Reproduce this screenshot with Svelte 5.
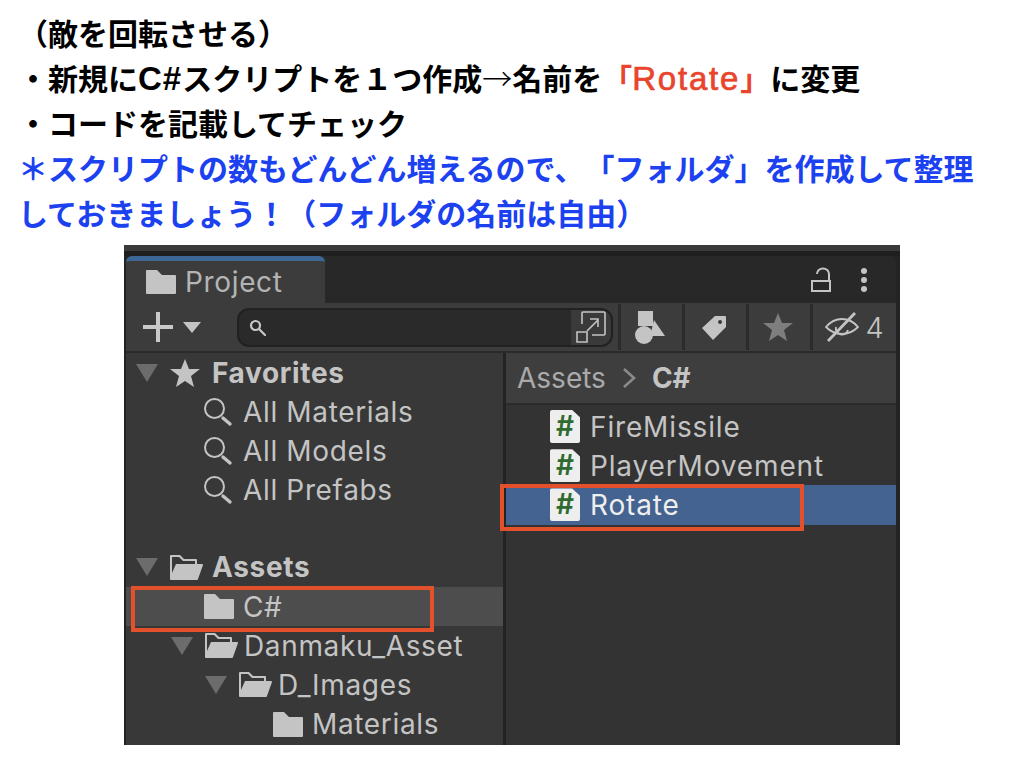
<script>
	const favorites = ['All Materials', 'All Models', 'All Prefabs'];
	const tree = [
		{ name: 'C#', indent: 78, open: false, selected: true },
		{ name: 'Danmaku_Asset', indent: 45, open: true },
		{ name: 'D_Images', indent: 79, open: true },
		{ name: 'Materials', indent: 147, open: false, noArrow: true }
	];
	const scripts = ['FireMissile', 'PlayerMovement', 'Rotate'];
</script>

<main class="page">
	<section class="notes">
		<p class="first">（敵を回転させる）</p>
		<p>・新規に<span class="latin">C#</span>スクリプトを１つ作成<span class="thin">→</span>名前を<span class="red">「<span class="latin">Rotate</span>」</span>に変更</p>
		<p>・コードを記載してチェック</p>
		<p class="blue">＊スクリプトの数もどんどん増えるので、「フォルダ」を作成して整理</p>
		<p class="blue">しておきましょう！（フォルダの名前は自由）</p>
	</section>

	<section class="panel">
		<div class="strip"></div>
		<header class="tabbar">
			<div class="tab">
				<svg class="tab-folder" viewBox="0 0 30 24"><path d="M1 0h10l5 5h13a1 1 0 0 1 1 1v17a1 1 0 0 1-1 1H1a1 1 0 0 1-1-1V1a1 1 0 0 1 1-1z" /></svg>
				<span>Project</span>
			</div>
			<div class="tab-actions">
				<svg width="20" height="26" viewBox="0 0 20 26" fill="none" stroke="#c4c4c4" stroke-width="2">
					<path d="M1 14h18v10H1z" /><path d="M6 7a6 5.5 0 0 1 12 0v7" />
				</svg>
				<svg width="10" height="26" viewBox="0 0 10 26" fill="#c4c4c4">
					<circle cx="5" cy="4" r="3" /><circle cx="5" cy="13" r="3" /><circle cx="5" cy="22" r="3" />
				</svg>
			</div>
		</header>

		<div class="toolbar">
			<div class="create">
				<svg width="30" height="30" viewBox="0 0 30 30" fill="#c9c9c9"><path d="M13 0h4v13h13v4H17v13h-4V17H0v-4h13z" /></svg>
				<svg width="18" height="11" viewBox="0 0 18 11" fill="#c4c4c4"><path d="M0 0h18L9 11z" /></svg>
			</div>
			<div class="search">
				<svg class="lens" width="17" height="17" viewBox="0 0 17 17" fill="none" stroke="#c8c8c8" stroke-width="2.2">
					<circle cx="6.5" cy="6.5" r="4.5" /><path d="M10 10l6 6" stroke-linecap="round" />
				</svg>
				<div class="search-end">
					<svg width="30" height="32" viewBox="0 0 30 32" fill="none" stroke="#c4c4c4" stroke-width="1.6">
						<path d="M6 13V2a1 1 0 0 1 1-1h21a1 1 0 0 1 1 1v21a1 1 0 0 1-1 1H16" />
						<path d="M1 21h10v10H1z" /><path d="M11 20l11-11M14 8h8v8" />
					</svg>
				</div>
			</div>
			<div class="tool">
				<svg width="30" height="33" viewBox="0 0 30 33" fill="#c4c4c4">
					<path d="M3 0h15v15H3z" /><path d="M19 9l11 16H15z" /><circle cx="9" cy="24" r="9" />
				</svg>
			</div>
			<div class="tool">
				<svg width="26" height="26" viewBox="0 0 26 26" fill="#c4c4c4" fill-rule="evenodd">
					<path d="M14 2h10a1 1 0 0 1 1 1v10L12 26 1 14zM19 6a2 2 0 1 0 .1 0z" />
				</svg>
			</div>
			<div class="tool">
				<svg width="30" height="28" viewBox="0 0 30 28" fill="#7e7e7e"><path d="M15 0l4 10h11l-9 7 3 11-9-6-9 6 3-11-9-7h11z" /></svg>
			</div>
			<div class="tool eye">
				<svg width="35" height="30" viewBox="0 0 35 30" fill="none" stroke="#c4c4c4" stroke-width="1.8">
					<path d="M1 15c5-6 10-8 16-8s11 2 16 8c-5 5-10 7-16 7S6 20 1 15z" />
					<path d="M11 15a6 6 0 0 0 12 3" /><path d="M3 29L30 1" stroke-width="2.8" />
				</svg>
				<span>4</span>
			</div>
		</div>

		<div class="body">
			<aside class="left">
				<div class="row head">
					<svg class="arrow" viewBox="0 0 22 18"><path d="M0 0h22L11 18z" /></svg>
					<svg class="head-icon star" width="30" height="28" viewBox="0 0 30 28" fill="#c4c4c4"><path d="M15 0l4 10h11l-9 7 3 11-9-6-9 6 3-11-9-7h11z" /></svg>
					<span>Favorites</span>
				</div>
				{#each favorites as item}
					<div class="row fav">
						<svg width="30" height="30" viewBox="0 0 30 30" fill="none" stroke="#c4c4c4">
							<circle cx="11.5" cy="11.5" r="9.5" stroke-width="2" /><path d="M20 21l7 6" stroke-width="3.4" stroke-linecap="round" />
						</svg>
						<span>{item}</span>
					</div>
				{/each}

				<div class="spacer"></div>

				<div class="row head">
					<svg class="arrow" viewBox="0 0 22 18"><path d="M0 0h22L11 18z" /></svg>
					<svg class="head-icon" width="33" height="25" viewBox="0 0 33 25" fill="#c4c4c4" fill-rule="evenodd"><path d="M1 0h9l4 4h12a1 1 0 0 1 1 1v4h5a1 1 0 0 1 1 1l-5 14a1 1 0 0 1-1 1H1a1 1 0 0 1-1-1V1a1 1 0 0 1 1-1zM2 2v16L6 9h19V6H13L9 2z" /></svg>
					<span>Assets</span>
				</div>
				{#each tree as item}
					<div class="row node" class:selected={item.selected} style="padding-left: {item.indent}px">
						{#if item.open}
							<svg class="arrow" viewBox="0 0 22 18"><path d="M0 0h22L11 18z" /></svg>
							<svg class="node-icon" width="33" height="25" viewBox="0 0 33 25" fill="#c4c4c4" fill-rule="evenodd"><path d="M1 0h9l4 4h12a1 1 0 0 1 1 1v4h5a1 1 0 0 1 1 1l-5 14a1 1 0 0 1-1 1H1a1 1 0 0 1-1-1V1a1 1 0 0 1 1-1zM2 2v16L6 9h19V6H13L9 2z" /></svg>
						{:else}
							<svg class="node-icon closed" width="30" height="25" viewBox="0 0 30 25" fill="#c4c4c4"><path d="M1 0h10l5 5h13a1 1 0 0 1 1 1v18a1 1 0 0 1-1 1H1a1 1 0 0 1-1-1V1a1 1 0 0 1 1-1z" /></svg>
						{/if}
						<span>{item.name}</span>
					</div>
				{/each}
				<div class="outline tree-mark"></div>
			</aside>

			<div class="right">
				<div class="crumbs">
					<span>Assets</span>
					<svg width="14" height="20" viewBox="0 0 14 20" fill="none" stroke="#8a8a8a" stroke-width="2.6"><path d="M2 1l10 9-10 9" /></svg>
					<b>C#</b>
				</div>
				<div class="files">
					{#each scripts as file}
						<div class="file" class:active={file === 'Rotate'}>
							<div class="doc"><span>#</span></div>
							<span>{file}</span>
						</div>
					{/each}
					<div class="outline file-mark"></div>
				</div>
			</div>
		</div>
	</section>
</main>

<style>
	:global(body) {
		background: #fff;
	}

	.page {
		width: 1024px;
		height: 768px;
		overflow: hidden;
		font-family: 'Noto Sans CJK JP', sans-serif;
	}

	.notes {
		padding: 10px 0 0 18px;
		height: 234px;
		box-sizing: border-box;
		font-size: 30px;
		font-weight: 700;
		color: #000;
		text-spacing-trim: space-all;
	}

	.notes p {
		margin: 0;
		height: 45px;
		line-height: 45px;
		white-space: nowrap;
	}

	.notes .blue {
		color: #1b41f0;
	}

	.latin {
		font-family: 'Liberation Sans', sans-serif;
		font-size: 33px;
		letter-spacing: 1px;
		line-height: 1;
	}

	.thin {
		font-weight: 300;
	}

	.red {
		color: #e8452c;
	}

	.red .latin {
		font-weight: 400;
		letter-spacing: 1.8px;
		-webkit-text-stroke: 0.7px #e8452c;
	}

	.panel {
		margin: 11px 0 0 124px;
		width: 776px;
		height: 500px;
		background: #232323;
		display: flex;
		flex-direction: column;
		font-family: Inter, sans-serif;
		color: #c4c4c4;
		overflow: hidden;
	}

	.strip {
		height: 6px;
		background: #3a3a3a;
		border-bottom: 5px solid #1f1f1f;
		flex: none;
	}

	.tabbar {
		height: 47px;
		flex: none;
		margin-left: 2px;
		margin-right: 4px;
		background: #282828;
		border-radius: 6px 6px 0 0;
		display: flex;
		justify-content: space-between;
		align-items: center;
	}

	.tab {
		width: 199px;
		height: 47px;
		box-sizing: border-box;
		background: #3c3c3c;
		border-top: 5px solid #3d6797;
		border-radius: 6px 6px 0 0;
		display: flex;
		align-items: center;
		gap: 9px;
		padding: 0 0 0 20px;
		font-size: 28px;
		letter-spacing: 0.65px;
		color: #b4b4b4;
	}

	.tab-folder {
		width: 30px;
		height: 24px;
		fill: #c4c4c4;
	}

	.tab-actions {
		display: flex;
		align-items: center;
		gap: 28px;
		padding-right: 27px;
	}

	.toolbar {
		height: 50px;
		flex: none;
		margin-left: 2px;
		margin-right: 4px;
		background: #3c3c3c;
		display: flex;
		align-items: center;
		border-bottom: 2px solid #2a2a2a;
		box-sizing: border-box;
	}

	.create {
		width: 111px;
		flex: none;
		padding-left: 17px;
		box-sizing: border-box;
		display: flex;
		align-items: center;
		gap: 10px;
	}

	.search {
		width: 376px;
		height: 39px;
		flex: none;
		box-sizing: border-box;
		margin-right: 5px;
		background: #2a2a2a;
		border: 2px solid #212121;
		border-radius: 12px;
		display: flex;
		align-items: center;
		justify-content: space-between;
		overflow: hidden;
	}

	.lens {
		margin-left: 10px;
	}

	.search-end {
		width: 40px;
		height: 100%;
		background: #3a3a3a;
		display: flex;
		align-items: center;
		justify-content: center;
	}

	.tool {
		width: 64px;
		height: 46px;
		flex: none;
		background: #3c3c3c;
		border-left: 3px solid #2b2b2b;
		box-sizing: border-box;
		display: flex;
		align-items: center;
		justify-content: center;
	}

	.tool svg {
		margin-right: 3px;
	}

	.tool.eye {
		width: 86px;
		gap: 2px;
		font-size: 29px;
		font-weight: 300;
	}

	.body {
		flex: 1;
		min-height: 0;
		margin-left: 2px;
		margin-right: 4px;
		display: flex;
		font-size: 28px;
		letter-spacing: 0.65px;
	}

	.left {
		position: relative;
		width: 377px;
		flex: none;
		background: #383838;
		box-sizing: border-box;
	}

	.row {
		height: 39.2px;
		display: flex;
		align-items: center;
		white-space: nowrap;
		box-sizing: border-box;
	}

	.arrow {
		width: 22px;
		height: 18px;
		flex: none;
		fill: #6c6c6c;
	}

	.head {
		padding-left: 10px;
		font-weight: 700;
	}

	.head-icon {
		flex: none;
		margin-left: 12px;
		margin-right: 9px;
	}

	.head-icon.star {
		margin-right: 12px;
	}

	.fav {
		padding-left: 77px;
		gap: 10px;
	}

	.spacer {
		height: 38px;
	}

	.node-icon {
		flex: none;
		margin-left: 12px;
		margin-right: 6px;
	}

	.node-icon.closed {
		margin-left: 0;
		margin-right: 9px;
	}

	.selected {
		background: #4d4d4d;
	}

	.outline {
		position: absolute;
		border: 4px solid #e2512c;
		box-sizing: border-box;
		pointer-events: none;
	}

	.tree-mark {
		left: 5px;
		top: 233px;
		width: 303px;
		height: 46px;
	}

	.right {
		flex: 1;
		margin-left: 3px;
		display: flex;
		flex-direction: column;
		background: #333;
	}

	.crumbs {
		height: 52px;
		flex: none;
		box-sizing: border-box;
		background: #3e3e3e;
		border-bottom: 2px solid #2c2c2c;
		padding-left: 11px;
		display: flex;
		align-items: center;
		gap: 16px;
		color: #aaa;
		letter-spacing: 0;
	}

	.crumbs b {
		color: #c4c4c4;
	}

	.files {
		position: relative;
		padding-top: 2px;
		letter-spacing: 0.85px;
	}

	.file {
		height: 39.2px;
		display: flex;
		align-items: center;
		padding-left: 44px;
		gap: 10px;
		white-space: nowrap;
	}

	.file.active {
		background: #446390;
		color: #eee;
	}

	.doc {
		width: 30px;
		height: 33px;
		flex: none;
		background: #eeeeee;
		border-radius: 2px;
		clip-path: polygon(0 0, 74% 0, 100% 22%, 100% 100%, 0 100%);
		color: #2f6a30;
		font-size: 28px;
		font-weight: 600;
		letter-spacing: 0;
		line-height: 33px;
		text-align: center;
	}

	.file-mark {
		left: -6px;
		top: 79px;
		width: 304px;
		height: 47px;
	}
</style>
